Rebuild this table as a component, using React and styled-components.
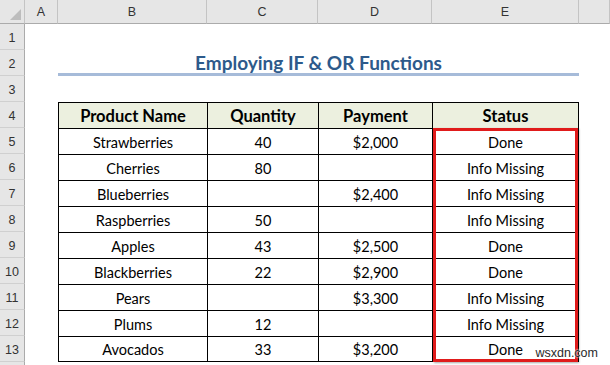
import React from 'react';
import styled, { createGlobalStyle } from 'styled-components';

const GlobalStyle = createGlobalStyle`
  html, body {
    margin: 0;
    padding: 0;
    background: #fff;
    overflow: hidden;
  }
  body {
    font-family: Lato, "Liberation Sans", sans-serif;
  }
`;

const Sheet = styled.div`
  position: relative;
  width: 610px;
  height: 365px;
  overflow: hidden;
  display: grid;
  grid-template-columns: 25px 33px 149px 111px 114px 147px 1fr;
  grid-template-rows: 24px repeat(14, 26px);
  background: #fff;
`;

const Corner = styled.div`
  grid-column: 1;
  grid-row: 1;
  background: #e6e6e6;
  border-right: 1px solid #c4c4c4;
  border-bottom: 1px solid #ababab;
  box-sizing: border-box;
  position: relative;
  &::after {
    content: '';
    position: absolute;
    right: 3px;
    bottom: 3px;
    border-left: 11px solid transparent;
    border-bottom: 11px solid #bdbdbd;
  }
`;

const ColHead = styled.div`
  grid-row: 1;
  grid-column: ${p => p.$col};
  background: #e6e6e6;
  border-right: 1px solid #c4c4c4;
  border-bottom: 1px solid #ababab;
  box-sizing: border-box;
  display: flex;
  align-items: center;
  justify-content: center;
  font-family: "Liberation Sans", Arial, sans-serif;
  font-size: 12.5px;
  color: #333;
`;

const RowHead = styled.div`
  grid-column: 1;
  grid-row: ${p => p.$row + 1};
  background: #e6e6e6;
  border-right: 1px solid #ababab;
  border-bottom: 1px solid #d0d0d0;
  box-sizing: border-box;
  display: flex;
  align-items: center;
  justify-content: center;
  padding-top: 2px;
  font-family: "Liberation Sans", Arial, sans-serif;
  font-size: 12.5px;
  color: #333;
`;

const Title = styled.div`
  grid-column: 3 / 7;
  grid-row: 3;
  border-bottom: 3px solid #a6bbd9;
  box-sizing: border-box;
  display: flex;
  align-items: center;
  justify-content: center;
  padding-top: 1px;
  font-family: Lato, "Liberation Sans", sans-serif;
  font-weight: 700;
  font-size: 19px;
  color: #2d5a8b;
`;

const Cell = styled.div`
  grid-column: ${p => p.$col};
  grid-row: ${p => p.$row + 1};
  box-sizing: border-box;
  border-left: 1px solid #000;
  border-top: 1px solid #000;
  border-right: ${p => (p.$last ? '1px solid #000' : 'none')};
  border-bottom: ${p => (p.$bottom ? '1px solid #000' : 'none')};
  background: ${p => (p.$head ? '#ecf0df' : '#fff')};
  display: flex;
  align-items: center;
  justify-content: center;
  padding-top: 1px;
  font-family: Lato, "Liberation Sans", sans-serif;
  font-weight: ${p => (p.$head ? 700 : 400)};
  font-size: ${p => (p.$head ? '16.5px' : '14.5px')};
  color: #000;
`;

const Highlight = styled.div`
  grid-column: 6;
  grid-row: 6 / 15;
  margin: 0 1px 0 1px;
  border: 3px solid #e01b1b;
  box-shadow: 1px 1px 2px rgba(0, 0, 0, 0.35);
  z-index: 2;
  pointer-events: none;
`;

const Watermark = styled.div`
  position: absolute;
  right: 12px;
  bottom: 5px;
  z-index: 3;
  font-family: "Liberation Sans", Arial, sans-serif;
  font-size: 12.5px;
  color: #2a2a2a;
  text-shadow: 0 0 2px #fff, 0 0 2px #fff;
`;

const rows = [
  ['Strawberries', '40', '$2,000', 'Done'],
  ['Cherries', '80', '', 'Info Missing'],
  ['Blueberries', '', '$2,400', 'Info Missing'],
  ['Raspberries', '50', '', 'Info Missing'],
  ['Apples', '43', '$2,500', 'Done'],
  ['Blackberries', '22', '$2,900', 'Done'],
  ['Pears', '', '$3,300', 'Info Missing'],
  ['Plums', '12', '', 'Info Missing'],
  ['Avocados', '33', '$3,200', 'Done'],
];

const headers = ['Product Name', 'Quantity', 'Payment', 'Status'];
const letters = ['A', 'B', 'C', 'D', 'E', ''];

export default function App() {
  return (
    <>
      <GlobalStyle />
      <Sheet>
        <Corner />
        {letters.map((l, i) => (
          <ColHead key={i} $col={i + 2}>{l}</ColHead>
        ))}
        {Array.from({ length: 14 }, (_, i) => (
          <RowHead key={i} $row={i + 1}>{i < 13 ? i + 1 : ''}</RowHead>
        ))}
        <Title>Employing IF &amp; OR Functions</Title>
        {headers.map((h, c) => (
          <Cell key={h} $head $col={c + 3} $row={4} $last={c === 3}>{h}</Cell>
        ))}
        {rows.map((r, ri) =>
          r.map((v, c) => (
            <Cell
              key={`${ri}-${c}`}
              $col={c + 3}
              $row={ri + 5}
              $last={c === 3}
              $bottom={ri === rows.length - 1}
            >
              {v}
            </Cell>
          ))
        )}
        <Highlight />
        <Watermark>wsxdn.com</Watermark>
      </Sheet>
    </>
  );
}
